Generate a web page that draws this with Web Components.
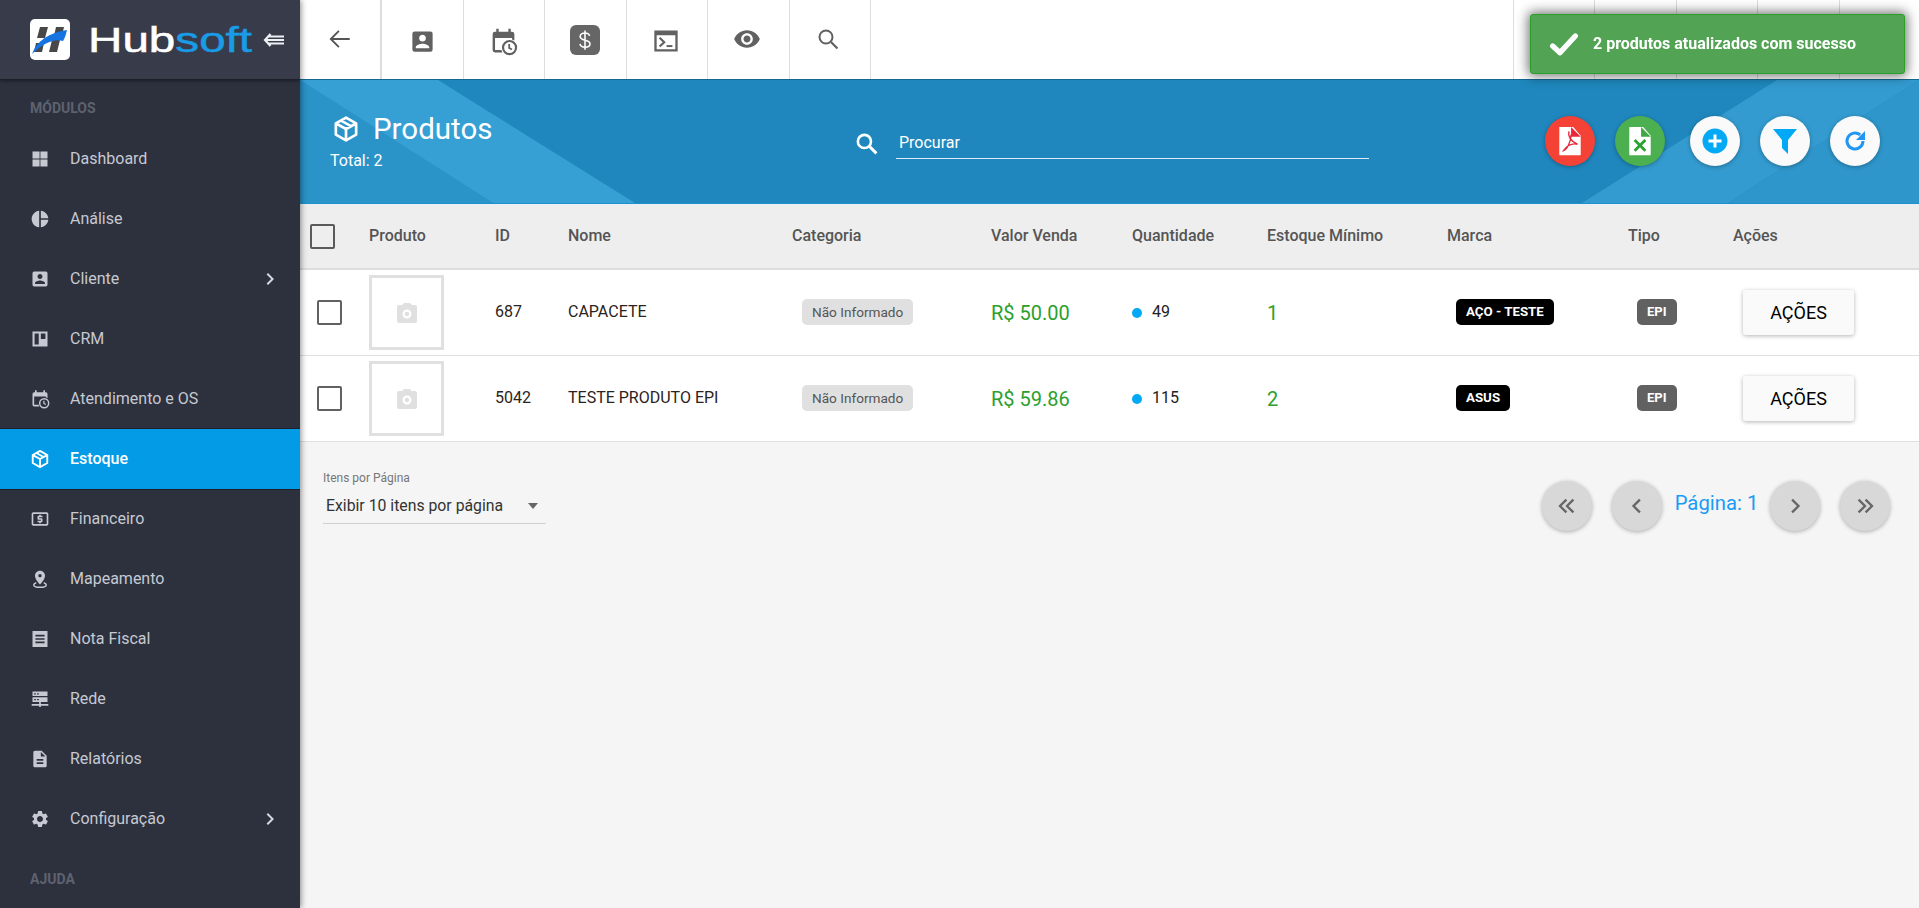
<!DOCTYPE html>
<html lang="pt-BR">
<head>
<meta charset="utf-8">
<title>Hubsoft - Produtos</title>
<style>
  html, body { margin: 0; height: 100%; overflow: hidden; background: #f5f5f5; font-family: Roboto, "Liberation Sans", sans-serif; }
  #app { display: grid; grid-template-columns: 300px 1fr; height: 908px; --cols: 69px 126px 73px 224px 199px 141px 135px 180px 181px 105px 186px; }
  main-area { min-width: 0; }
</style>
</head>
<body>
<div id="app">
  <side-bar></side-bar>
  <main-area>
    <top-bar></top-bar>
    <page-header></page-header>
    <table-head></table-head>
    <product-row pid="687" name="CAPACETE" price="R$ 50.00" qty="49" min="1" brand="AÇO - TESTE"></product-row>
    <product-row pid="5042" name="TESTE PRODUTO EPI" price="R$ 59.86" qty="115" min="2" brand="ASUS"></product-row>
    <table-footer></table-footer>
  </main-area>
</div>
<toast-message>2 produtos atualizados com sucesso</toast-message>

<script>
const svg = (body, size = 24, extra = '') =>
  `<svg xmlns="http://www.w3.org/2000/svg" width="${size}" height="${size}" viewBox="0 0 24 24" fill="currentColor" ${extra}>${body}</svg>`;

const ICONS = {
  grid: '<path d="M3 3h8.500v8.500H3zM12.500 3H21v8.500h-8.500zM3 12.500h8.500V21H3zM12.500 12.500H21V21h-8.500z"/>',
  pie: '<path d="M11 2v20c-5.070-.5-9-4.790-9-10s3.930-9.500 9-10zm2.030 0v8.990H22c-.47-4.740-4.240-8.520-8.970-8.990zm0 11.010V22c4.740-.47 8.500-4.250 8.970-8.990h-8.970z"/>',
  contact: '<path d="M3 5v14a2 2 0 002 2h14a2 2 0 002-2V5a2 2 0 00-2-2H5a2 2 0 00-2 2zm12 4c0 1.660-1.340 3-3 3s-3-1.340-3-3 1.340-3 3-3 3 1.340 3 3zm-9 8c0-2 4-3.100 6-3.100s6 1.100 6 3.100v1H6v-1z"/>',
  board: '<path fill-rule="evenodd" d="M3 3h18v18H3zM5.500 5.500v13h5v-13zM13 5.500v6.500h5.500v-6.500z"/>',
  calendar: '<path d="M6 1.500h2V4h8V1.500h2V4h1a2 2 0 012 2v5.200a6.600 6.600 0 00-2-.900V9H5v10h5.300c.2.700.5 1.400.9 2H5a2 2 0 01-2-2V6a2 2 0 012-2h1z"/><circle cx="17" cy="17" r="5.400" fill="none" stroke="currentColor" stroke-width="1.800"/><path d="M16.700 14v3.300l2.300 1.400" fill="none" stroke="currentColor" stroke-width="1.500"/>',
  box: '<path d="M12 2.300l8.700 4.900v9.600L12 21.700l-8.700-4.900V7.200zM12 12v9.500M3.500 7.300L12 12l8.500-4.700M7.800 4.800l8.400 4.800" fill="none" stroke="currentColor" stroke-width="2.300" stroke-linejoin="round"/>',
  money: '<path d="M11 17h2v-1h1c.55 0 1-.45 1-1v-3c0-.55-.45-1-1-1h-3v-1h4V8h-2V7h-2v1h-1c-.55 0-1 .45-1 1v3c0 .55.45 1 1 1h3v1H9v2h2v1zm9-13H4c-1.110 0-1.990.89-1.990 2L2 18c0 1.110.89 2 2 2h16c1.110 0 2-.89 2-2V6c0-1.110-.89-2-2-2zm0 14H4V6h16v12z"/>',
  pin: '<path d="M18 8c0-3.310-2.690-6-6-6S6 4.690 6 8c0 4.500 6 10.500 6 10.500s6-6 6-10.500zm-8 0c0-1.100.9-2 2-2s2 .9 2 2-.89 2-2 2c-1.100 0-2-.9-2-2z"/><path d="M7.500 16.500C5.500 17.200 4.500 18.200 4.500 19.200c0 1.600 3.400 2.800 7.500 2.800s7.500-1.200 7.500-2.800c0-1-1-2-3-2.700" fill="none" stroke="currentColor" stroke-width="1.800"/>',
  receipt: '<path fill-rule="evenodd" d="M3 2.500h18v19H3zM6.500 7v2h11V7zM6.500 11v2h11v-2zM6.500 15v2h11v-2z"/>',
  server: '<path fill-rule="evenodd" d="M3 3h18v5.500H3zM5 5v1.500h2V5zM8.500 5v1.500h2V5zM3 10h18v5.500H3zM5 12v1.500h2V12zM8.500 12v1.500h2V12z"/><path d="M11 15.500h2V18h9v2h-9v1.500h-2V20H2v-2h9z"/>',
  doc: '<path d="M14 2H6c-1.100 0-1.990.9-1.990 2L4 20c0 1.100.89 2 1.990 2H18c1.100 0 2-.9 2-2V8l-6-6zm2 16H8v-2h8v2zm0-4H8v-2h8v2zm-3-5V3.500L18.500 9H13z"/>',
  gear: '<path d="M19.140 12.940c.04-.3.06-.61.06-.94 0-.32-.02-.64-.07-.94l2.030-1.580c.18-.14.23-.41.12-.61l-1.920-3.320c-.12-.22-.37-.29-.59-.22l-2.390.96c-.5-.38-1.030-.7-1.620-.94l-.36-2.540c-.04-.24-.24-.41-.48-.41h-3.840c-.24 0-.43.17-.47.41l-.36 2.540c-.59.24-1.130.57-1.620.94l-2.390-.96c-.22-.08-.47 0-.59.22L2.740 8.870c-.12.21-.08.47.12.61l2.030 1.580c-.05.3-.09.63-.09.94s.02.64.07.94l-2.030 1.580c-.18.14-.23.41-.12.61l1.920 3.320c.12.22.37.29.59.22l2.390-.96c.5.38 1.030.7 1.620.94l.36 2.540c.05.24.24.41.48.41h3.840c.24 0 .44-.17.47-.41l.36-2.540c.59-.24 1.130-.56 1.620-.94l2.390.96c.22.08.47 0 .59-.22l1.920-3.320c.12-.22.07-.47-.12-.61l-2.010-1.580zM12 15.600c-1.980 0-3.600-1.620-3.600-3.600s1.620-3.600 3.600-3.600 3.600 1.620 3.600 3.600-1.620 3.600-3.600 3.600z"/>',
  chevron: '<path d="M8.590 16.590L13.170 12 8.590 7.410 10 6l6 6-6 6z"/>',
  back: '<path d="M21 12H4M11 4.500L3.500 12l7.500 7.500" fill="none" stroke="currentColor" stroke-width="1.700"/>',
  terminal: '<path fill-rule="evenodd" d="M2 3h20v18H2zM4 7v12h16V7z"/><path d="M6.500 9.200L10.500 13l-4 3.800" fill="none" stroke="currentColor" stroke-width="1.800"/><path d="M12.500 15.500h5v1.700h-5z"/>',
  eye: '<path d="M12 4.500C7 4.500 2.730 7.610 1 12c1.730 4.390 6 7.500 11 7.500s9.270-3.110 11-7.500c-1.730-4.390-6-7.500-11-7.500zM12 17c-2.760 0-5-2.240-5-5s2.240-5 5-5 5 2.240 5 5-2.240 5-5 5zm0-8c-1.660 0-3 1.340-3 3s1.340 3 3 3 3-1.340 3-3-1.340-3-3-3z"/>',
  search: '<circle cx="10" cy="10" r="6.500" fill="none" stroke="currentColor" stroke-width="2"/><path d="M15 15l6.500 6.500" stroke="currentColor" stroke-width="2.200"/>',
  searchBold: '<circle cx="10" cy="10" r="6.300" fill="none" stroke="currentColor" stroke-width="2.500"/><path d="M15 15l6.500 6.500" stroke="currentColor" stroke-width="2.800"/>',
  camera: '<path fill-rule="evenodd" d="M9 2L7.170 4H4c-1.100 0-2 .9-2 2v14c0 1.100.9 2 2 2h16c1.100 0 2-.9 2-2V6c0-1.100-.9-2-2-2h-3.170L15 2zm3 15.500a4.500 4.500 0 110-9 4.500 4.500 0 010 9zm0-2.200a2.300 2.300 0 100-4.600 2.300 2.300 0 000 4.600z"/>',
  check: '<path d="M3.500 13.500l5.500 5L20.500 6" fill="none" stroke="currentColor" stroke-width="4" stroke-linecap="round" stroke-linejoin="round"/>'
};

class SideBar extends HTMLElement {
  constructor() {
    super();
    this.attachShadow({ mode: 'open' }).innerHTML = `
      <style>
        :host { display: block; height: 908px; background: #2d313e; box-shadow: 1px 0 6px rgba(0,0,0,.45); position: relative; z-index: 3; overflow: hidden; }
        .head { height: 79px; background: #383c4a; border-bottom: 1px solid #1e2029; box-shadow: 0 1px 3px rgba(0,0,0,.4); display: flex; align-items: center; padding-left: 30px; }
        .logo { flex: none; }
        .word { font: 400 35px/1 "Liberation Sans", sans-serif; color: #fff; margin-left: 18px; width: 116px; transform: scaleX(1.36); transform-origin: left center; white-space: nowrap; -webkit-text-stroke: .5px currentColor; }
        .word b { font-weight: 400; color: #1a9be6; }
        .toggle { position: absolute; left: 263px; top: 32px; }
        .label { font: 700 14px/1 Roboto, sans-serif; color: #5e626e; padding-left: 30px; display: flex; align-items: center; box-sizing: border-box; }
        .top { height: 49px; padding-top: 7px; }
        .bottom { height: 59px; }
      </style>
      <div class="head">
        <svg class="logo" width="40" height="41" viewBox="0 0 40 41">
          <rect width="40" height="41" rx="5" fill="#fff"/>
          <path d="M10 8h8l-3 11h-8zM26 8h8l-2 9h-8zM22 21h8l-3 12h-8zM6 24h8l-2 9H4z" fill="#484848"/>
          <path d="M2 35C7 22 18 14 37 11c-1 4-2 8-4 11-8-3-20 2-31 13z" fill="#1574e0"/>
        </svg>
        <div class="word">Hub<b>soft</b></div>
        <svg class="toggle" width="22" height="16" viewBox="0 0 22 16" fill="none" stroke="#eef0f4" stroke-width="2.200">
          <path d="M7.500 2L2 8l5.500 6M5 4.500h16M3 8h18M5 11.500h16"/>
        </svg>
      </div>
      <div class="label top">MÓDULOS</div>
      <nav-item icon="grid">Dashboard</nav-item>
      <nav-item icon="pie">Análise</nav-item>
      <nav-item icon="contact" more>Cliente</nav-item>
      <nav-item icon="board">CRM</nav-item>
      <nav-item icon="calendar">Atendimento e OS</nav-item>
      <nav-item icon="box" active>Estoque</nav-item>
      <nav-item icon="money">Financeiro</nav-item>
      <nav-item icon="pin">Mapeamento</nav-item>
      <nav-item icon="receipt">Nota Fiscal</nav-item>
      <nav-item icon="server">Rede</nav-item>
      <nav-item icon="doc">Relatórios</nav-item>
      <nav-item icon="gear" more>Configuração</nav-item>
      <div class="label bottom">AJUDA</div>`;
  }
}

class NavItem extends HTMLElement {
  constructor() {
    super();
    this.attachShadow({ mode: 'open' });
  }
  connectedCallback() {
    this.shadowRoot.innerHTML = `
      <style>
        :host { display: flex; align-items: center; height: 60px; box-sizing: border-box; padding-left: 30px; color: #c6c9d1; font: 400 16px Roboto, sans-serif; position: relative; }
        :host([active]) { background: #039be5; color: #fff; font-weight: 500; box-shadow: 0 0 0 1px #1e2029; }
        .ico { width: 20px; height: 20px; margin-right: 20px; display: flex; align-items: center; justify-content: center; }
        .more { position: absolute; left: 258px; top: 18px; color: #d5d7dd; }
      </style>
      <span class="ico">${svg(ICONS[this.getAttribute('icon')], 20)}</span>
      <span style="margin-top:-1px"><slot></slot></span>
      ${this.hasAttribute('more') ? `<span class="more">${svg(ICONS.chevron, 24)}</span>` : ''}`;
  }
}

class TopBar extends HTMLElement {
  constructor() {
    super();
    const cell = (w, body) => `<div class="cell" style="width:${w}px">${body}</div>`;
    this.attachShadow({ mode: 'open' }).innerHTML = `
      <style>
        :host { display: flex; height: 79px; background: #fff; box-sizing: border-box; color: #616161; position: relative; z-index: 1; }
        .cell { height: 79px; box-sizing: border-box; border-right: 1px solid #ddd; display: flex; align-items: center; justify-content: center; flex: none; }
        .cell.first { border-right-width: 2px; }
        .right { margin-left: auto; display: flex; border-left: 1px solid #ddd; }
        .right .cell:last-child { border-right: 0; }
        .dollar { width: 30px; height: 30px; border-radius: 6px; background: #666; color: #fff; display: flex; align-items: center; justify-content: center; }
      </style>
      <div class="cell first" style="width:82px;padding-bottom:1px;color:#555">${svg(ICONS.back, 26)}</div>
      ${cell(81.5, svg(ICONS.contact, 27, 'style="margin-top:3px"'))}
      ${cell(81.5, svg(ICONS.calendar, 29, 'style="margin-top:3px"'))}
      ${cell(81.5, `<span class="dollar" style="margin-top:1px"><svg width="22" height="24" viewBox="0 0 24 24" fill="none" stroke="#fff" stroke-width="1.700"><path d="M17 7.500C16.500 5.300 14.500 4.300 12 4.300c-3 0-5.300 1.500-5.300 3.900 0 5.300 10.800 2.700 10.800 8 0 2.300-2.500 3.700-5.500 3.700-2.800 0-5-1.200-5.500-3.600M12 1.500v21"/></svg></span>`)}
      ${cell(81, svg(ICONS.terminal, 28, 'style="margin-top:2px;margin-right:2px"'))}
      ${cell(82, svg(ICONS.eye, 28, 'style="margin-top:-1px;margin-right:2px"'))}
      ${cell(81, svg(ICONS.search, 24, 'style="margin-top:-2px;margin-right:3px"'))}
      <div class="right">
        ${cell(81, '')}${cell(82, '')}${cell(81, '')}${cell(82, '')}${cell(79, '')}
      </div>`;
  }
}

class PageHeader extends HTMLElement {
  constructor() {
    super();
    this.attachShadow({ mode: 'open' }).innerHTML = `
      <style>
        :host { display: flex; align-items: center; height: 125px; box-sizing: border-box; background: #1f87bd; color: #fff; padding: 0 39px 1px 30px; position: relative; border-top: 1px solid #14688f; border-bottom: 1px solid #1a92cf; font-family: Roboto, sans-serif; }
        .bg { position: absolute; left: 0; top: 0; width: 100%; height: 100%; }
        .title, .search, .actions { position: relative; }
        .title { width: 524px; flex: none; padding-bottom: 1px; }
        .title .row { display: flex; align-items: center; height: 36px; margin-left: 2px; }
        .title h1 { margin: 1px 0 0 13px; font: 400 29.500px/36px Roboto, sans-serif; }
        .total { font: 400 16px/20px Roboto, sans-serif; margin-top: 4px; }
        .search { display: flex; align-items: center; margin-top: 5px; }
        .field { width: 473px; margin-left: 17px; border-bottom: 1px solid rgba(255,255,255,.85); font: 400 16px/28px Roboto, sans-serif; padding-left: 3px; box-sizing: border-box; height: 30px; margin-top: 1px; }
        .actions { margin-left: auto; display: flex; gap: 20px; }
        .gap { margin-left: 5px; }
      </style>
      <svg class="bg" viewBox="0 0 1619 122" preserveAspectRatio="none">
        <path d="M0 0L193 122H0z" fill="#2a93c8"/>
        <path d="M0 0H138L335 122H193z" fill="#36a0d5"/>
        <path d="M1477 0H1619L1428 122H1282z" fill="#339bd0"/>
        <path d="M1619 0V122H1428z" fill="#2e96cb"/>
      </svg>
      <div class="title">
        <div class="row">${svg(ICONS.box, 28)}<h1>Produtos</h1></div>
        <div class="total">Total: 2</div>
      </div>
      <div class="search">
        ${svg(ICONS.searchBold, 25)}
        <div class="field">Procurar</div>
      </div>
      <div class="actions">
        <round-button color="#f44336"><svg width="26" height="30" viewBox="0 0 24 28"><path d="M2 1h13l7 8v17.500a.9.900 0 01-.9.9H2.900a.9.900 0 01-.9-.9z" fill="#fff"/><path d="M13 1l9 9h-9z" fill="#e8283a"/><path d="M11 5c-1 4 1 9 8 12-4-.8-9 0-13 6 3-1 7-8 7-15" fill="none" stroke="#e8283a" stroke-width="1.300"/></svg></round-button>
        <round-button color="#4caf50"><svg width="26" height="30" viewBox="0 0 24 28"><path d="M2 1h13l7 8v17.500a.9.900 0 01-.9.9H2.900a.9.900 0 01-.9-.9z" fill="#fff"/><path d="M13 1l9 9h-9z" fill="#3fa845"/><path d="M7 13l10 10M17 13L7 23" stroke="#2ba12f" stroke-width="2.600"/></svg></round-button>
        <round-button class="gap" color="#fafafa"><svg width="26" height="26" viewBox="0 0 26 26"><circle cx="13" cy="13" r="12.500" fill="#03a9f4"/><path d="M13 6.500v13M6.500 13h13" stroke="#fff" stroke-width="3"/></svg></round-button>
        <round-button color="#fafafa"><svg width="24" height="27" viewBox="0 0 24 27"><path d="M0 1h24L15 12v14l-6-6v-8z" fill="#03a9f4"/></svg></round-button>
        <round-button color="#fafafa"><svg width="24" height="24" viewBox="0 0 24 24" fill="#2196f3"><path d="M20 12a8 8 0 11-2.800-6.100" fill="none" stroke="#2196f3" stroke-width="3"/><path d="M22 2v9h-9z"/></svg></round-button>
      </div>`;
  }
}

class RoundButton extends HTMLElement {
  constructor() {
    super();
    this.attachShadow({ mode: 'open' });
  }
  connectedCallback() {
    this.shadowRoot.innerHTML = `
      <style>
        :host { display: flex; align-items: center; justify-content: center; width: 50px; height: 50px; border-radius: 50%; background: ${this.getAttribute('color')}; box-shadow: 0 1px 4px rgba(0,0,0,.3); flex: none; }
      </style>
      <slot></slot>`;
  }
}

class TableHead extends HTMLElement {
  constructor() {
    super();
    const cols = ['Produto', 'ID', 'Nome', 'Categoria', 'Valor Venda', 'Quantidade', 'Estoque Mínimo', 'Marca', 'Tipo', 'Ações'];
    this.attachShadow({ mode: 'open' }).innerHTML = `
      <style>
        :host { display: grid; grid-template-columns: var(--cols); align-items: center; height: 66px; box-sizing: border-box; background: #eeeeee; border-bottom: 2px solid #ddd; color: #555; font: 500 16px Roboto, sans-serif; padding-bottom: 2px; }
        .box { width: 21px; height: 21px; border: 2px solid #5a5a5a; border-radius: 2px; margin: 2px 0 0 10px; }
      </style>
      <div><div class="box"></div></div>
      ${cols.map(c => `<div>${c}</div>`).join('')}`;
  }
}

class ProductRow extends HTMLElement {
  constructor() {
    super();
    this.attachShadow({ mode: 'open' });
  }
  connectedCallback() {
    const a = n => this.getAttribute(n);
    this.shadowRoot.innerHTML = `
      <style>
        :host { display: grid; grid-template-columns: var(--cols); align-items: center; height: 86px; box-sizing: border-box; background: #fff; border-bottom: 1px solid #e0e0e0; color: #222; font: 400 16px Roboto, sans-serif; }
        .box { width: 21px; height: 21px; border: 2px solid #616161; border-radius: 2px; margin-left: 17px; }
        .thumb { width: 75px; height: 75px; box-sizing: border-box; border: 3px solid #e0e0e0; display: flex; align-items: center; justify-content: center; color: #e0e0e0; }
        .txt { margin-top: -3px; color: #2b2320; }
        .chip { display: inline-block; height: 26px; line-height: 26px; border-radius: 5px; padding: 0 10px; font-size: 14px; box-sizing: border-box; margin-top: -1px; vertical-align: top; }
        .gray { background: #e0e0e0; color: #555; margin-left: 10px; font-size: 13.600px; }
        .black { background: #000; color: #fff; font-weight: 700; font-size: 13.300px; margin-left: 9px; padding: 0 10px; }
        .epi { background: #616161; color: #fff; font-weight: 700; font-size: 13px; margin-left: 9px; }
        .green { color: #2ca02c; font-size: 20px; }
        .qty { display: flex; align-items: center; }
        .dot { width: 10px; height: 10px; border-radius: 50%; background: #03a9f4; margin-right: 10px; }
        .qty span:last-child { margin-top: -3px; }
        .act { width: 111px; height: 45px; margin-left: 10px; background: #fafafa; box-shadow: 0 1px 4px rgba(0,0,0,.3); border-radius: 3px; display: flex; align-items: center; justify-content: center; color: #000; font: 400 18px Roboto, sans-serif; }
      </style>
      <div><div class="box"></div></div>
      <div><div class="thumb">${svg(ICONS.camera, 24)}</div></div>
      <div class="txt">${a('pid')}</div>
      <div class="txt">${a('name')}</div>
      <div><span class="chip gray">Não Informado</span></div>
      <div class="green">${a('price')}</div>
      <div class="qty"><span class="dot"></span><span>${a('qty')}</span></div>
      <div class="green">${a('min')}</div>
      <div><span class="chip black">${a('brand')}</span></div>
      <div><span class="chip epi">EPI</span></div>
      <div><div class="act">AÇÕES</div></div>`;
  }
}

class TableFooter extends HTMLElement {
  constructor() {
    super();
    const arrow = d => `<svg width="28" height="28" viewBox="0 0 24 24" fill="none" stroke="#666" stroke-width="2">${d}</svg>`;
    this.attachShadow({ mode: 'open' }).innerHTML = `
      <style>
        :host { display: flex; justify-content: space-between; padding: 29px 29px 0 23px; font-family: Roboto, sans-serif; }
        .sel { width: 223px; height: 52px; border-bottom: 1px solid #d0d0d0; }
        .sel label { display: block; font-size: 12px; line-height: 14px; color: #777; }
        .val { display: flex; align-items: center; justify-content: space-between; font-size: 15.800px; color: #333; padding: 11px 8px 0 3px; }
        .caret { width: 0; height: 0; border: 5px solid transparent; border-top: 6px solid #666; margin-top: 5px; }
        .pager { display: flex; align-items: flex-start; padding-top: 10px; }
        .gap { margin-left: 20px; }
        .page { color: #1a9cf5; font-size: 20.300px; line-height: 24px; width: 108px; text-align: center; margin-top: 10px; padding-left: 1px; box-sizing: border-box; }
      </style>
      <div class="sel">
        <label>Itens por Página</label>
        <div class="val"><span>Exibir 10 itens por página</span><span class="caret"></span></div>
      </div>
      <div class="pager">
        <round-button color="#d8d8d8">${arrow('<path d="M11.500 6.500L6 12l5.500 5.500M17.500 6.500L12 12l5.500 5.500"/>')}</round-button>
        <round-button class="gap" color="#d8d8d8">${arrow('<path d="M14.500 6.500L9 12l5.500 5.500"/>')}</round-button>
        <div class="page">Página: 1</div>
        <round-button color="#d8d8d8">${arrow('<path d="M9.500 6.500L15 12l-5.500 5.500"/>')}</round-button>
        <round-button class="gap" color="#d8d8d8">${arrow('<path d="M6.500 6.500L12 12l-5.500 5.500M12.500 6.500L18 12l-5.500 5.500"/>')}</round-button>
      </div>`;
  }
}

class ToastMessage extends HTMLElement {
  constructor() {
    super();
    this.attachShadow({ mode: 'open' }).innerHTML = `
      <style>
        :host { position: fixed; left: 1530px; top: 14px; width: 375px; height: 60px; box-sizing: border-box; background: #52a354; border: 1px solid #27a127; border-radius: 3px; box-shadow: 0 0 12px 2px rgba(0,0,0,.55); color: #fff; display: flex; align-items: center; padding-left: 17px; font: 700 16px Roboto, sans-serif; z-index: 9; padding-bottom: 1px; }
        svg { margin-right: 13px; margin-top: 1px; }
      </style>
      ${svg(ICONS.check, 32)}<slot></slot>`;
  }
}

customElements.define('side-bar', SideBar);
customElements.define('nav-item', NavItem);
customElements.define('top-bar', TopBar);
customElements.define('page-header', PageHeader);
customElements.define('round-button', RoundButton);
customElements.define('table-head', TableHead);
customElements.define('product-row', ProductRow);
customElements.define('table-footer', TableFooter);
customElements.define('toast-message', ToastMessage);
</script>
</body>
</html>
